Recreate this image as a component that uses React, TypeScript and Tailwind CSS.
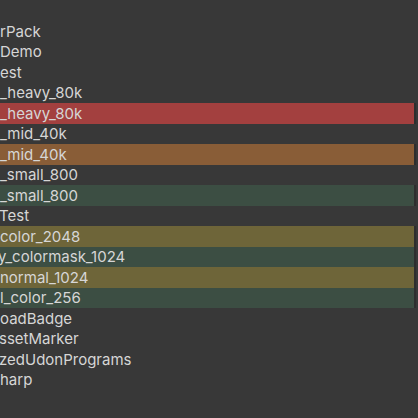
import React from "react";

type Row = { text: string; band?: string; shift?: string };

const rows: Row[] = [
  { text: "" },
  { text: "rPack" },
  { text: "Demo" },
  { text: "est" },
  { text: "_heavy_80k" },
  { text: "_heavy_80k", band: "bg-[#a3403f]" },
  { text: "_mid_40k" },
  { text: "_mid_40k", band: "bg-[#895d37]" },
  { text: "_small_800" },
  { text: "_small_800", band: "bg-[#3c4e43]" },
  { text: "Test", shift: "-ml-[1px]" },
  { text: "color_2048", band: "bg-[#6e6539]" },
  { text: "y_colormask_1024", band: "bg-[#3c4e43]", shift: "-ml-[2px]" },
  { text: "normal_1024", band: "bg-[#6e6539]" },
  { text: "l_color_256", band: "bg-[#3c4e43]" },
  { text: "oadBadge" },
  { text: "ssetMarker", shift: "-ml-[1px]" },
  { text: "zedUdonPrograms", shift: "-ml-[1px]" },
  { text: "harp" },
  { text: "" },
  { text: "" },
];

export default function App() {
  return (
    <div className="w-[418px] h-[418px] overflow-hidden bg-[#383838] pt-[0.5px] font-['Inter','Noto_Sans',sans-serif]">
      {rows.map((r, i) => (
        <div
          key={i}
          className={
            "h-[20.5px] w-[416px] flex items-center overflow-hidden " +
            (r.band ? r.band + " border-r-2 border-[#2e2e2e]" : "")
          }
        >
          <span
            className={
              "text-[15px] leading-none text-[#d6d6d6] whitespace-nowrap " +
              (r.shift ?? "")
            }
          >
            {r.text}
          </span>
        </div>
      ))}
    </div>
  );
}
